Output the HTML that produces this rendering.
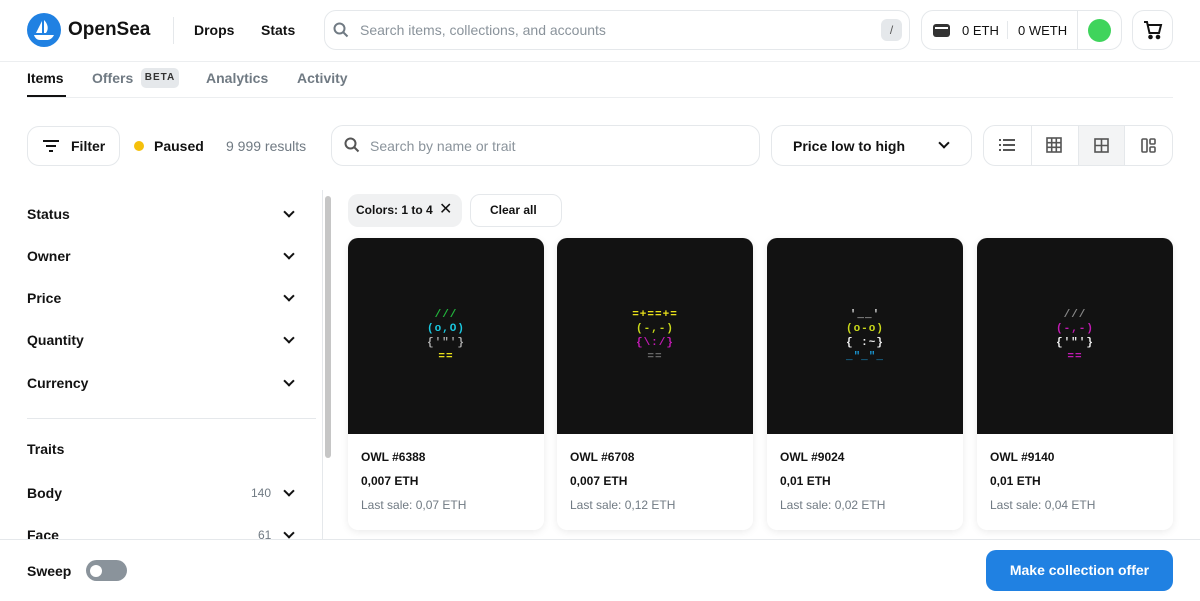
<!DOCTYPE html>
<html><head><meta charset="utf-8"><style>
*{box-sizing:border-box;margin:0;padding:0}
body{width:1200px;height:601px;overflow:hidden;background:#fff;font-family:"Liberation Sans",sans-serif;color:#121212;position:relative}
.a{position:absolute}
.b{font-weight:bold}
.box{position:absolute;border:1px solid #e5e8eb;border-radius:12px;background:#fff}
.chev{position:absolute;width:8px;height:8px;border-right:2px solid #121212;border-bottom:2px solid #121212;transform:rotate(45deg)}
.side{position:absolute;left:27px;font-size:14px;font-weight:bold}
.card{position:absolute;top:238px;width:196px;height:292px;border-radius:10px;background:#fff;box-shadow:0 2px 8px rgba(0,0,0,.08);overflow:hidden}
.img{height:196px;background:#121212;padding-top:70px;font-family:"Liberation Mono",monospace;font-weight:bold;font-size:11px;line-height:14px;text-align:center;letter-spacing:1px}
.img div{height:14px;white-space:pre}
.card .t{position:absolute;left:13px;font-size:12px;font-weight:bold}
.card .s{position:absolute;left:13px;top:260px;font-size:12px;color:#707a83}
</style></head><body>
<svg class="a" style="left:27px;top:13px" width="34" height="34" viewBox="0 0 34 34"><circle cx="17" cy="17" r="17" fill="#2081e2"/><path d="M15 8 L9 20 H15Z M17 7 C21 11 22 16 19 20 H17Z M7 22 H27 C25 26 22 27 20 27 H13 C10 27 8 25 7 22Z" fill="#fff"/></svg>
<div class="a b" style="left:68px;top:19px;font-size:19px">OpenSea</div>
<div class="a" style="left:173px;top:17px;width:1px;height:27px;background:#e5e8eb"></div>
<div class="a b" style="left:194px;top:22px;font-size:14px">Drops</div>
<div class="a b" style="left:261px;top:22px;font-size:14px">Stats</div>
<div class="box" style="left:324px;top:10px;width:586px;height:40px"></div>
<svg class="a" style="left:333px;top:22px" width="16" height="16" viewBox="0 0 16 16"><circle cx="6.5" cy="6.5" r="5" fill="none" stroke="#707a83" stroke-width="2"/><path d="M10 10 L14.5 14.5" stroke="#707a83" stroke-width="2"/></svg>
<div class="a" style="left:360px;top:22px;font-size:14px;color:#8a939b">Search items, collections, and accounts</div>
<div class="a" style="left:881px;top:19px;width:21px;height:22px;border-radius:6px;background:#e5e8eb;font-size:12px;text-align:center;line-height:22px;color:#555">/</div>
<div class="box" style="left:921px;top:10px;width:201px;height:40px"></div>
<div class="a" style="left:933px;top:24px;width:17px;height:13px;border-radius:3px;background:#333"></div><div class="a" style="left:935px;top:27px;width:13px;height:2px;background:#fff"></div>
<div class="a" style="left:962px;top:23px;font-size:13px">0 ETH</div>
<div class="a" style="left:1007px;top:21px;width:1px;height:18px;background:#e5e8eb"></div>
<div class="a" style="left:1018px;top:23px;font-size:13px">0 WETH</div>
<div class="a" style="left:1077px;top:11px;width:1px;height:38px;background:#e5e8eb"></div>
<div class="a" style="left:1088px;top:19px;width:23px;height:23px;border-radius:50%;background:#3fd45c"></div>
<div class="box" style="left:1132px;top:10px;width:41px;height:40px"></div>
<svg class="a" style="left:1143px;top:20px" width="20" height="20" viewBox="0 0 20 20" fill="none" stroke="#121212" stroke-width="2"><path d="M1 2 H4 L6.5 13 H16 L18 5 H5"/><circle cx="7.5" cy="17" r="1.3" fill="#121212"/><circle cx="15" cy="17" r="1.3" fill="#121212"/></svg>
<div class="a" style="left:0;top:61px;width:1200px;height:1px;background:#eceef0"></div>
<div class="a b" style="left:27px;top:70px;font-size:14px">Items</div>
<div class="a" style="left:27px;top:95px;width:39px;height:2px;background:#121212"></div>
<div class="a b" style="left:92px;top:70px;font-size:14px;color:#707a83">Offers</div>
<div class="a b" style="left:141px;top:68px;width:38px;height:20px;border-radius:5px;background:#e5e8eb;font-size:10px;letter-spacing:1px;line-height:20px;text-align:center;color:#333">BETA</div>
<div class="a b" style="left:206px;top:70px;font-size:14px;color:#707a83">Analytics</div>
<div class="a b" style="left:297px;top:70px;font-size:14px;color:#707a83">Activity</div>
<div class="a" style="left:27px;top:97px;width:1146px;height:1px;background:#eceef0"></div>
<div class="box" style="left:27px;top:126px;width:93px;height:40px"></div>
<div class="a" style="left:43px;top:140px;width:16px;height:2px;background:#121212"></div><div class="a" style="left:46px;top:145px;width:10px;height:2px;background:#121212"></div><div class="a" style="left:49px;top:150px;width:4px;height:2px;background:#121212"></div>
<div class="a b" style="left:71px;top:138px;font-size:14px">Filter</div>
<div class="a" style="left:134px;top:141px;width:10px;height:10px;border-radius:50%;background:#f5c00b"></div>
<div class="a b" style="left:154px;top:138px;font-size:14px">Paused</div>
<div class="a" style="left:226px;top:138px;font-size:14px;color:#707a83">9 999 results</div>
<div class="box" style="left:331px;top:125px;width:429px;height:41px"></div>
<svg class="a" style="left:344px;top:137px" width="16" height="16" viewBox="0 0 16 16"><circle cx="6.5" cy="6.5" r="5" fill="none" stroke="#555" stroke-width="2"/><path d="M10 10 L14.5 14.5" stroke="#555" stroke-width="2"/></svg>
<div class="a" style="left:370px;top:138px;font-size:14px;color:#8a939b">Search by name or trait</div>
<div class="box" style="left:771px;top:125px;width:201px;height:41px"></div>
<div class="a b" style="left:793px;top:138px;font-size:14px">Price low to high</div>
<div class="chev" style="left:940px;top:139px"></div>
<div class="box" style="left:983px;top:125px;width:190px;height:41px;overflow:hidden"><div class="a" style="left:94px;top:0;width:47px;height:41px;background:#f3f4f5;border-left:1px solid #e5e8eb;border-right:1px solid #e5e8eb"></div><div class="a" style="left:47px;top:0;width:1px;height:41px;background:#e5e8eb"></div></div>
<svg class="a" style="left:998px;top:137px" width="18" height="16" viewBox="0 0 18 16" fill="#555"><rect x="1" y="2" width="2" height="2"/><rect x="5" y="2" width="12" height="2"/><rect x="1" y="7" width="2" height="2"/><rect x="5" y="7" width="12" height="2"/><rect x="1" y="12" width="2" height="2"/><rect x="5" y="12" width="12" height="2"/></svg>
<svg class="a" style="left:1046px;top:137px" width="16" height="16" viewBox="0 0 16 16" fill="none" stroke="#555" stroke-width="1.6"><rect x="1" y="1" width="14" height="14"/><path d="M5.7 1V15M10.3 1V15M1 5.7H15M1 10.3H15"/></svg>
<svg class="a" style="left:1094px;top:138px" width="15" height="15" viewBox="0 0 15 15" fill="none" stroke="#555" stroke-width="1.6"><rect x="1" y="1" width="13" height="13"/><path d="M7.5 1V14M1 7.5H14"/></svg>
<svg class="a" style="left:1141px;top:138px" width="15" height="15" viewBox="0 0 15 15" fill="none" stroke="#555" stroke-width="1.6"><rect x="1" y="1" width="5" height="13" rx="1"/><rect x="9" y="1" width="5" height="5" rx="1"/><rect x="9" y="9" width="5" height="5" rx="1"/></svg>
<div class="side" style="top:206px">Status</div><div class="chev" style="left:285px;top:208px"></div>
<div class="side" style="top:248px">Owner</div><div class="chev" style="left:285px;top:250px"></div>
<div class="side" style="top:290px">Price</div><div class="chev" style="left:285px;top:292px"></div>
<div class="side" style="top:332px">Quantity</div><div class="chev" style="left:285px;top:334px"></div>
<div class="side" style="top:375px">Currency</div><div class="chev" style="left:285px;top:377px"></div>
<div class="a" style="left:27px;top:418px;width:289px;height:1px;background:#e5e8eb"></div>
<div class="side" style="top:441px">Traits</div>
<div class="side" style="top:485px">Body</div><div class="a" style="left:251px;top:486px;font-size:12px;color:#707a83">140</div><div class="chev" style="left:285px;top:487px"></div>
<div class="side" style="top:527px">Face</div><div class="a" style="left:258px;top:528px;font-size:12px;color:#707a83">61</div><div class="chev" style="left:285px;top:529px"></div>
<div class="a" style="left:322px;top:190px;width:1px;height:360px;background:#e5e8eb"></div>
<div class="a" style="left:325px;top:196px;width:6px;height:262px;border-radius:3px;background:#c6c6c6"></div>
<div class="a" style="left:348px;top:194px;width:114px;height:33px;border-radius:10px;background:#f0f1f2"></div>
<div class="a b" style="left:356px;top:203px;font-size:12px">Colors: 1 to 4</div>
<div class="a" style="left:439px;top:202px;font-size:16px;line-height:16px">✕</div>
<div class="box" style="left:470px;top:194px;width:92px;height:33px;border-radius:10px"></div>
<div class="a b" style="left:490px;top:203px;font-size:12px">Clear all</div>
<div class="card" style="left:348px"><div class="img"><div style="color:#22b73d">///</div><div style="color:#1ac8e0">(o,O)</div><div style="color:#aaa">{'"'}</div><div style="color:#e9e01a">==</div></div><div class="t" style="top:212px">OWL #6388</div><div class="t" style="top:236px">0,007 ETH</div><div class="s">Last sale: 0,07 ETH</div></div>
<div class="card" style="left:557px"><div class="img"><div style="color:#e9e01a">=+==+=</div><div style="color:#c9d81a">(-,-)</div><div style="color:#c21ab3">{\:/}</div><div style="color:#666">==</div></div><div class="t" style="top:212px">OWL #6708</div><div class="t" style="top:236px">0,007 ETH</div><div class="s">Last sale: 0,12 ETH</div></div>
<div class="card" style="left:767px"><div class="img"><div style="color:#ddd">'__'</div><div style="color:#c9d81a">(o-o)</div><div style="color:#eee">{ :~}</div><div style="color:#1a9ad8">_"_"_</div></div><div class="t" style="top:212px">OWL #9024</div><div class="t" style="top:236px">0,01 ETH</div><div class="s">Last sale: 0,02 ETH</div></div>
<div class="card" style="left:977px"><div class="img"><div style="color:#888">///</div><div style="color:#c21ab3">(-,-)</div><div style="color:#eee">{'"'}</div><div style="color:#c21ab3">==</div></div><div class="t" style="top:212px">OWL #9140</div><div class="t" style="top:236px">0,01 ETH</div><div class="s">Last sale: 0,04 ETH</div></div>
<div class="a" style="left:0;top:539px;width:1200px;height:62px;background:#fff;border-top:1px solid #e5e8eb"></div>
<div class="a b" style="left:27px;top:563px;font-size:14px">Sweep</div>
<div class="a" style="left:86px;top:560px;width:41px;height:21px;border-radius:11px;background:#8a939b"></div>
<div class="a" style="left:90px;top:565px;width:12px;height:12px;border-radius:50%;background:#fff"></div>
<div class="a b" style="left:986px;top:550px;width:187px;height:41px;border-radius:10px;background:#2081e2;color:#fff;font-size:14px;text-align:center;line-height:41px">Make collection offer</div>
</body></html>
